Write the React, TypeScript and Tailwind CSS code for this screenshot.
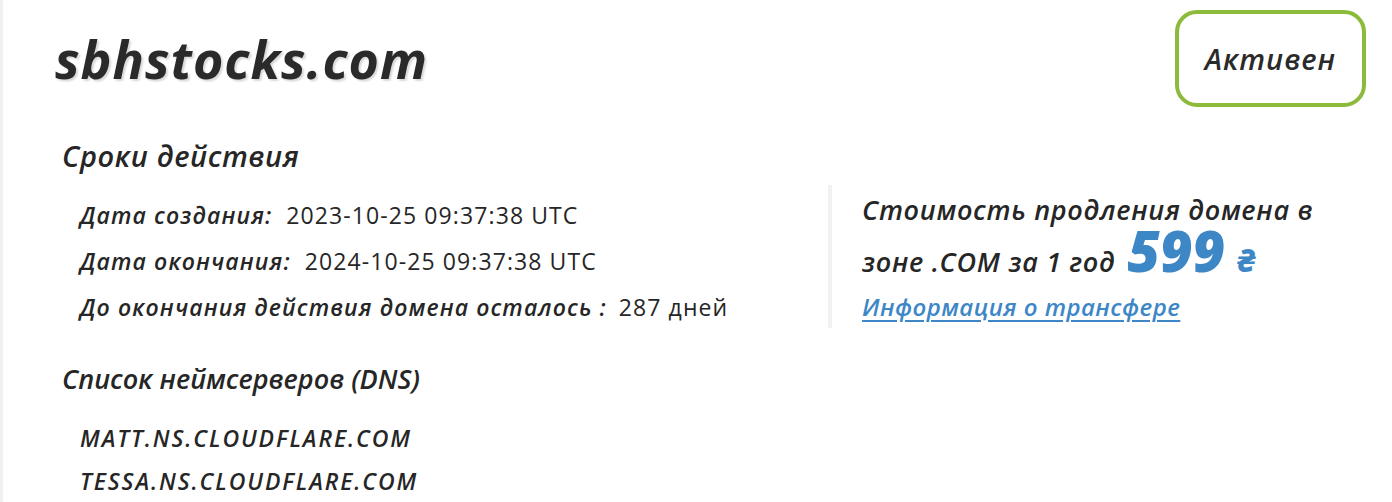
import React from "react";

const F = { fontFamily: '"Open Sans", "Noto Sans", sans-serif' } as const;

export default function App() {
  return (
    <div className="w-[1392px] h-[502px] bg-white border-l-[3px] border-[#eef0f4] overflow-hidden text-[#262626]" style={F}>
      <div className="flex justify-between items-start h-[107px]">
        <h1 className="ml-[52px] mt-[27px] text-[52px] leading-[64px] font-bold italic tracking-[1px] text-[#2a2a2a] [text-shadow:2px_2px_2px_#d9d9d9]">
          sbhstocks.com
        </h1>
        <div className="mt-[10px] mr-[26px] w-[191px] h-[97px] rounded-[22px] border-[4px] border-[#8cbb3c] flex items-center justify-center text-[29px] font-semibold italic tracking-[1px] text-[#2a2a2a]">
          Активен
        </div>
      </div>

      <div className="flex mt-[31px]">
        <div className="w-[825px] pl-[59px]">
          <h2 className="text-[29px] leading-[36px] font-semibold italic tracking-[0.6px]">Сроки действия</h2>
          <div className="pl-[18px] mt-[18px] flex flex-col text-[23px] leading-[46px] tracking-[1.1px]">
            <div>
              <span className="font-semibold italic">Дата создания:</span>
              <span className="ml-[14px]">2023-10-25 09:37:38 UTC</span>
            </div>
            <div>
              <span className="font-semibold italic">Дата окончания:</span>
              <span className="ml-[14px]">2024-10-25 09:37:38 UTC</span>
            </div>
            <div>
              <span className="font-semibold italic">До окончания действия домена осталось :</span>
              <span className="ml-[12px]">287 дней</span>
            </div>
          </div>
        </div>
        <div className="mt-[47px] self-start h-[143px] border-l-[4px] border-[#f1f1f1] pl-[30px] w-[520px]">
          <div className="text-[27px] leading-[52px] font-semibold italic tracking-[0.7px] -mt-[1px]">
            <div>Стоимость продления домена в</div>
            <div>
              зоне .COM за 1 год
              <span className="ml-[12px] text-[56px] leading-[0px] font-extrabold tracking-[0px] text-[#3d87c7]">599</span>
              <span className="ml-[12px] text-[32px] leading-[0px] font-extrabold text-[#3d87c7]">₴</span>
            </div>
          </div>
          <a href="#" className="block -mt-[3px] text-[24px] leading-[44px] font-semibold italic tracking-[0.45px] text-[#3d87c7] underline underline-offset-[4px]">
            Информация о трансфере
          </a>
        </div>
      </div>

      <div className="pl-[59px] mt-[31px]">
        <h2 className="text-[27px] leading-[36px] font-semibold italic">Список неймсерверов (DNS)</h2>
        <div className="pl-[18px] mt-[20px] flex flex-col text-[23px] leading-[43px] italic font-semibold tracking-[1.9px]">
          <div>MATT.NS.CLOUDFLARE.COM</div>
          <div>TESSA.NS.CLOUDFLARE.COM</div>
        </div>
      </div>
    </div>
  );
}
